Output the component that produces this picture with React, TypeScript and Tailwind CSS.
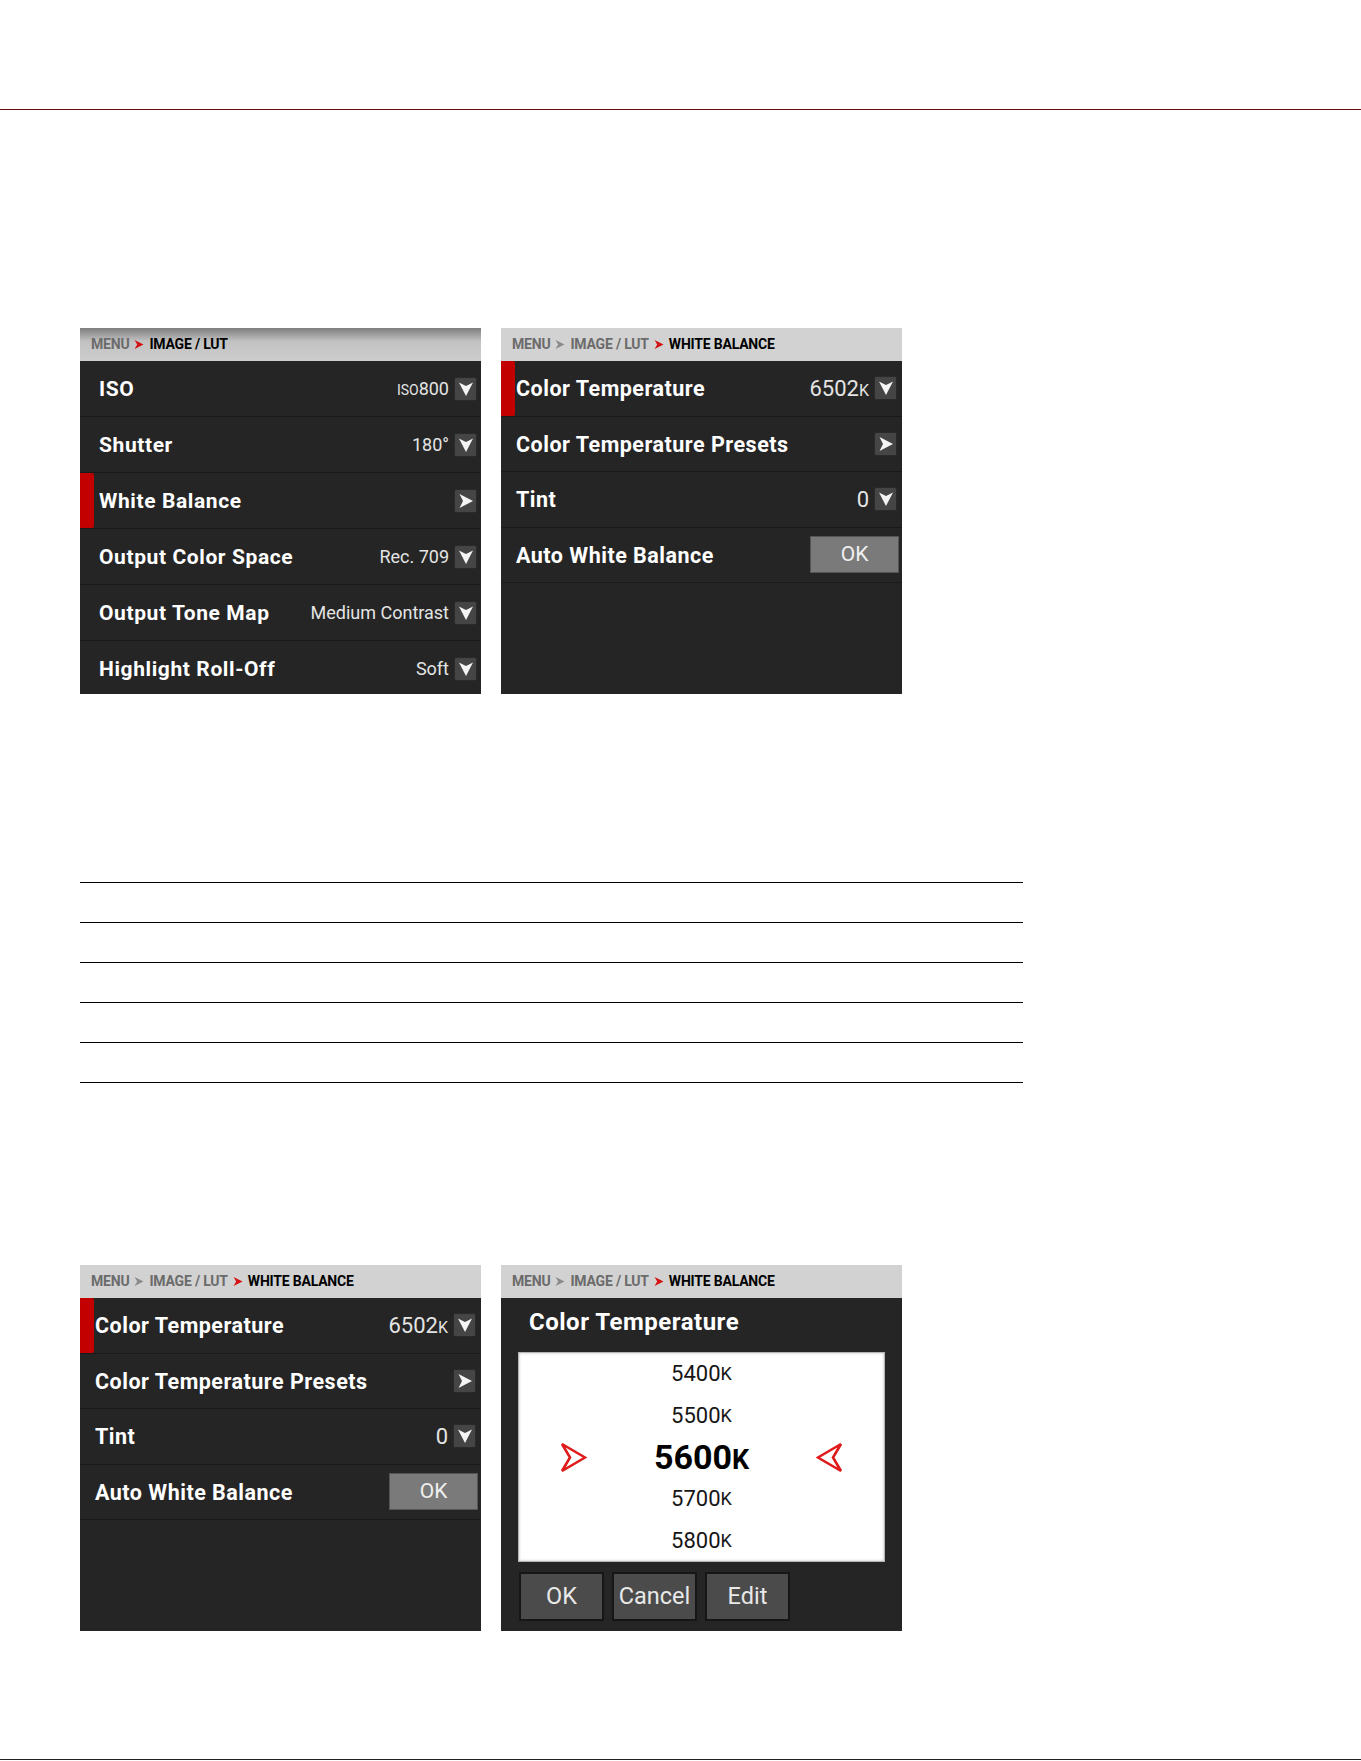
import React from 'react';

type Crumb = { text: string; current?: boolean };

// Small filled arrowhead used between breadcrumb items
const CrumbArrow = ({ red }: { red?: boolean }) => (
  <svg width="10" height="11" viewBox="0 0 10 11" className="mx-[5px] shrink-0">
    <path d="M0.5 1 L9.5 5.5 L0.5 10 L3.2 5.5 Z" fill={red ? '#d41010' : '#8a8a8a'} />
  </svg>
);

const Breadcrumb = ({ items, dark }: { items: Crumb[]; dark?: boolean }) => (
  <div
    className={`flex h-[33px] shrink-0 items-center pl-[11px] text-[14px] font-bold tracking-[-0.2px] ${
      dark
        ? 'bg-gradient-to-b from-[#7e7e7e] via-[#c2c2c2] via-40% to-[#cdcdcd]'
        : 'bg-[#d2d2d2]'
    }`}
  >
    {items.map((c, i) => (
      <React.Fragment key={c.text}>
        {i > 0 && <CrumbArrow red={c.current} />}
        <span className={c.current ? 'text-black' : 'text-[#6b6b6b]'}>{c.text}</span>
      </React.Fragment>
    ))}
  </div>
);

const DropButton = ({ kind }: { kind: 'down' | 'right' }) => (
  <div className="flex h-[24px] w-[23px] shrink-0 items-center justify-center rounded-[2px] border border-[#2a2a2a] bg-[#454545]">
    <svg width="16" height="16" viewBox="0 0 16 16">
      {kind === 'down' ? (
        <path d="M1 1.5 L8 5 L15 1.5 L8 15 Z" fill="#f4f4f4" />
      ) : (
        <path d="M1.5 1 L15 8 L1.5 15 L5 8 Z" fill="#f4f4f4" />
      )}
    </svg>
  </div>
);

type Row = {
  label: string;
  value?: React.ReactNode;
  control?: 'down' | 'right' | 'ok';
  active?: boolean;
};

const MenuRow = ({ row, big }: { row: Row; big?: boolean }) => (
  <div
    className={`relative flex shrink-0 items-center border-b border-[#1a1a1a] ${big ? 'h-[55.5px]' : 'h-[56px]'}`}
  >
    {row.active && <div className="absolute inset-y-0 left-0 w-[14px] rounded-r-[2px] bg-[#c30000]" />}
    <span
      className={`flex-1 pt-[2px] font-bold text-white ${
        big ? 'pl-[15px] text-[21.5px] tracking-[0.5px]' : 'pl-[19px] text-[21px] tracking-[0.6px]'
      }`}
    >
      {row.label}
    </span>
    {row.value !== undefined && (
      <span className={`mr-[5px] text-[#e4e4e4] ${big ? 'text-[22px]' : 'text-[18px]'}`}>{row.value}</span>
    )}
    {row.control === 'ok' ? (
      <div className="mr-[3px] flex h-[37px] w-[89px] items-center justify-center border border-[#555] bg-[#7a7a7a] text-[21px] text-[#f0f0f0]">
        OK
      </div>
    ) : (
      row.control && (
        <div className={big ? 'mr-[5px]' : 'mr-[4px]'}>
          <DropButton kind={row.control} />
        </div>
      )
    )}
  </div>
);

const Kelvin = ({ n, size = 'text-[16px]' }: { n: string; size?: string }) => (
  <>
    {n}
    <span className={size}>K</span>
  </>
);

const imageLutRows: Row[] = [
  { label: 'ISO', value: <><span className="text-[14px]">ISO</span>800</>, control: 'down' },
  { label: 'Shutter', value: '180°', control: 'down' },
  { label: 'White Balance', control: 'right', active: true },
  { label: 'Output Color Space', value: 'Rec. 709', control: 'down' },
  { label: 'Output Tone Map', value: 'Medium Contrast', control: 'down' },
  { label: 'Highlight Roll-Off', value: 'Soft', control: 'down' },
];

const wbRows: Row[] = [
  { label: 'Color Temperature', value: <Kelvin n="6502" />, control: 'down', active: true },
  { label: 'Color Temperature Presets', control: 'right' },
  { label: 'Tint', value: '0', control: 'down' },
  { label: 'Auto White Balance', control: 'ok' },
];

const wbCrumbs: Crumb[] = [
  { text: 'MENU' },
  { text: 'IMAGE / LUT' },
  { text: 'WHITE BALANCE', current: true },
];

const Panel = ({ children }: { children: React.ReactNode }) => (
  <div className="flex h-[366px] w-[401px] flex-col overflow-hidden bg-[#252525]">{children}</div>
);

const PickArrow = ({ flip }: { flip?: boolean }) => (
  <svg width="27" height="31" viewBox="0 0 27 31" className={flip ? '-scale-x-100' : ''}>
    <path d="M2 2 L25 15.5 L2 29 L10 15.5 Z" fill="none" stroke="#e01b1b" strokeWidth="2.6" strokeLinejoin="miter" />
  </svg>
);

const TempPicker = () => (
  <Panel>
    <Breadcrumb items={wbCrumbs} />
    <div className="pl-[28px] pt-[10px] text-[24px] font-bold leading-[28px] tracking-[0.5px] text-white">
      Color Temperature
    </div>
    <div className="ml-[17px] mt-[16px] flex h-[210px] w-[367px] flex-col border border-[#b5b5b5] bg-white text-[22px] text-[#161616] shadow-[inset_0_0_3px_rgba(0,0,0,0.25)]">
      <div className="flex h-[42px] items-center justify-center"><Kelvin n="5400" size="text-[18px]" /></div>
      <div className="flex h-[42px] items-center justify-center"><Kelvin n="5500" size="text-[18px]" /></div>
      <div className="flex h-[42px] items-center justify-between px-[41px]">
        <PickArrow />
        <span className="text-[34px] font-bold text-black"><Kelvin n="5600" size="text-[27px]" /></span>
        <PickArrow flip />
      </div>
      <div className="flex h-[42px] items-center justify-center"><Kelvin n="5700" size="text-[18px]" /></div>
      <div className="flex h-[42px] items-center justify-center"><Kelvin n="5800" size="text-[18px]" /></div>
    </div>
    <div className="ml-[18px] mt-[10px] flex gap-[8px]">
      {['OK', 'Cancel', 'Edit'].map(b => (
        <div
          key={b}
          className="flex h-[49px] w-[85px] items-center justify-center border-2 border-[#161616] bg-[#4b4b4b] text-[23.5px] text-[#e8e8e8]"
        >
          {b}
        </div>
      ))}
    </div>
  </Panel>
);

export default function App() {
  return (
    <div className="flex h-[1761px] w-[1361px] flex-col bg-white font-[Roboto,'Liberation_Sans',sans-serif]">
      <div className="h-[109px]" />
      <div className="h-px bg-[#6e0c0c]" />
      <div className="h-[218px]" />

      <div className="flex gap-[20px] pl-[80px]">
        <Panel>
          <Breadcrumb
            dark
            items={[{ text: 'MENU' }, { text: 'IMAGE / LUT', current: true }]}
          />
          {imageLutRows.map(r => (
            <MenuRow key={r.label} row={r} />
          ))}
        </Panel>
        <Panel>
          <Breadcrumb items={wbCrumbs} />
          {wbRows.map(r => (
            <MenuRow key={r.label} row={r} big />
          ))}
        </Panel>
      </div>

      <div className="h-[188px]" />

      {/* empty ruled table */}
      <div className="ml-[80px] flex w-[943px] flex-col gap-[39px]">
        {[0, 1, 2, 3, 4, 5].map(i => (
          <div key={i} className="h-px bg-black" />
        ))}
      </div>

      <div className="h-[182px]" />

      <div className="flex gap-[20px] pl-[80px]">
        <Panel>
          <Breadcrumb items={wbCrumbs} />
          {wbRows.map(r => (
            <MenuRow key={r.label} row={r} big />
          ))}
        </Panel>
        <TempPicker />
      </div>

      <div className="flex-1" />
      <div className="mb-px h-px bg-[#222]" />
    </div>
  );
}
